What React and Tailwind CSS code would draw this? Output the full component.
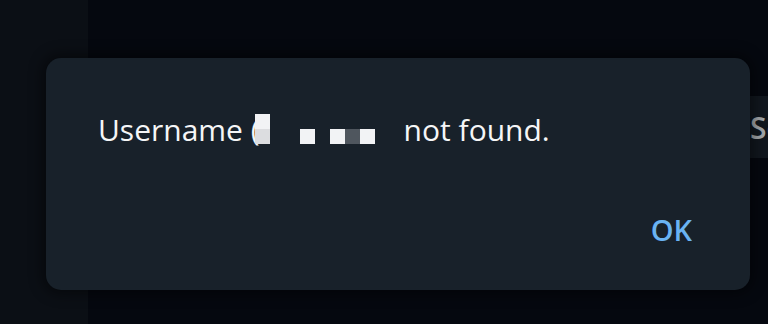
import React from 'react';

const Redacted = () => (
  <span className="inline-flex items-end align-baseline -ml-[5px] mr-[29px] -translate-y-[12px]">
    <span className="flex flex-col w-[15px]">
      <span className="h-[15px] bg-[#f2f3f5]" />
      <span className="h-[15px] bg-[#dcdde0]" />
    </span>
    <span className="w-[30px]" />
    <span className="w-[15px] h-[15px] bg-[#f2f3f5]" />
    <span className="w-[15px]" />
    <span className="w-[15px] h-[15px] bg-[#f2f3f5]" />
    <span className="w-[15px] h-[15px] bg-[#4f565e]" />
    <span className="w-[15px] h-[15px] bg-[#f2f3f5]" />
  </span>
);

export default function App() {
  return (
    <div
      className="relative w-[768px] h-[324px] overflow-hidden flex bg-[#05080f]"
      style={{ fontFamily: '"Open Sans", "Noto Sans", sans-serif' }}
    >
      <div className="w-[88px] shrink-0 h-full bg-[#0b0f15]" />
      <div className="flex-1 min-w-0 pt-[96px]">
        <div className="ml-[612px] w-[200px] h-[62px] bg-[#11171e] pl-[50px] flex items-center text-[30px] font-semibold text-[#a3a7ab]">
          Search
        </div>
      </div>

      <div className="absolute left-[46px] top-[58px] w-[704px] h-[232px] rounded-[15px] bg-[#18212a] shadow-[0_0_14px_4px_rgba(0,0,0,0.45)] flex flex-col">
        <p className="pt-[52px] pl-[52px] text-[30px] leading-[40px] text-[#f5f6f7] whitespace-nowrap">
          Username (<Redacted />not found.
        </p>
        <div className="mt-auto mb-[40px] mr-[58px] flex justify-end">
          <button className="text-[29px] leading-[40px] font-semibold text-[#6ab3f3]">OK</button>
        </div>
      </div>
    </div>
  );
}
